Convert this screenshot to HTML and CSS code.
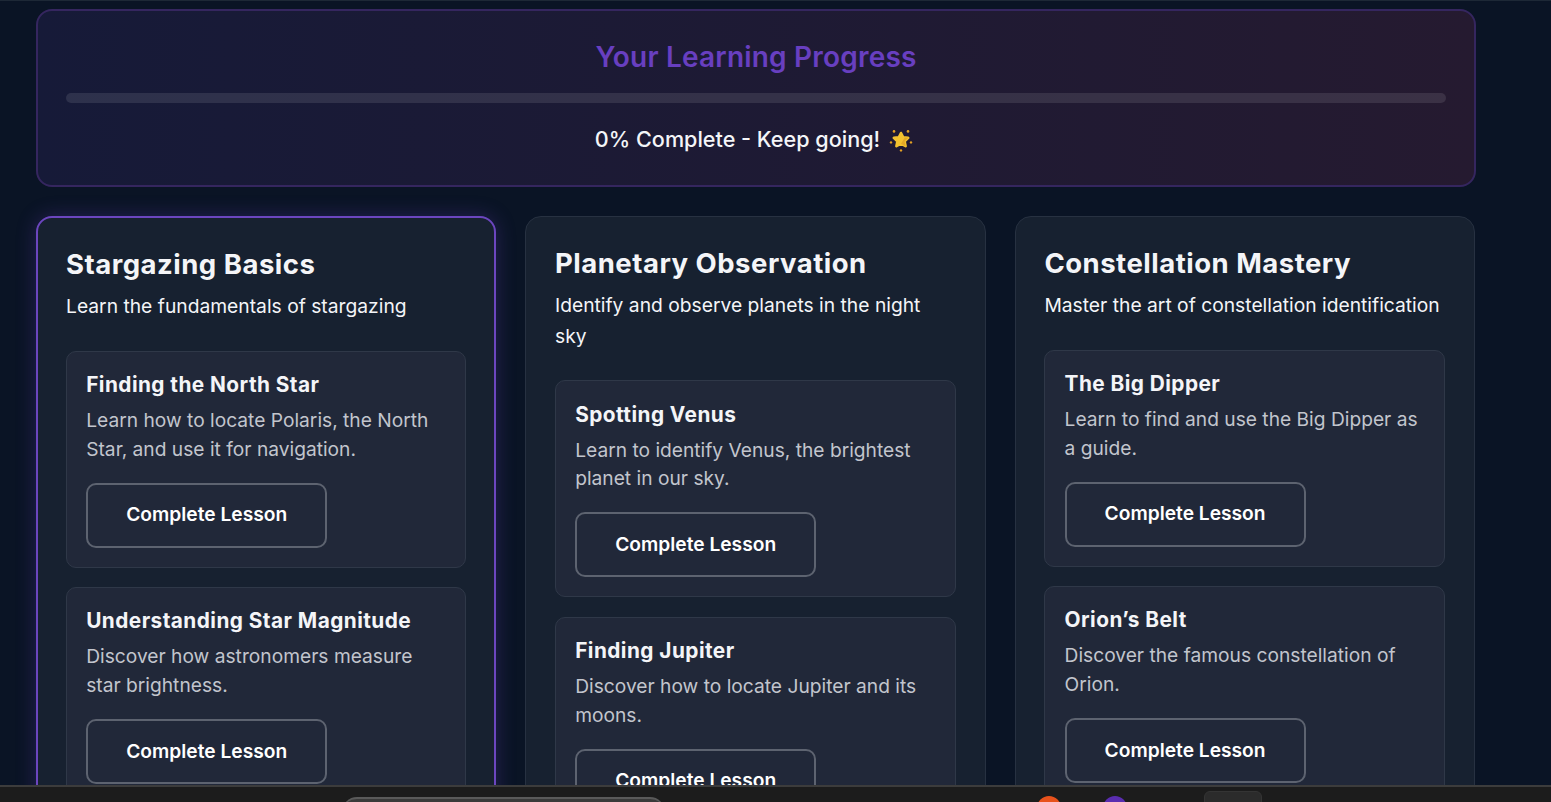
FILE: index.html
```html
<!DOCTYPE html>
<html>
	<head>
		<meta charset="utf-8">
		<meta name="viewport" content="width=device-width,initial-scale=1">
		<title>Stargazing Lessons</title>
		<link rel="stylesheet" href="styles.css">
	</head>
	<body>
		<main class="container">
			<section class="progress">
				<h2 class="progress-title">Your Learning Progress</h2>
				<div class="progress-track"></div>
				<p class="progress-text">
					<span>0% Complete - Keep going!</span>
					<svg class="star" viewBox="0 0 24 24" width="24" height="24" aria-hidden="true">
						<path d="M12 5l2.2 4.4 5 .4-3.6 3.4 1 5-4.6-2.5-4.6 2.5 1-5-3.6-3.4 5-.4z" fill="#f3c22f" stroke="#f3c22f" stroke-width="2.6" stroke-linejoin="round"/>
						<path d="M12 15.7l4.6 2.5-1-5 3.6-3.4-3.4-.3z" fill="#e3a927"/>
						<g fill="#e3a024">
							<circle cx="5" cy="3.4" r="1.3"/>
							<circle cx="19" cy="3.4" r="1.3"/>
							<circle cx="2" cy="14.4" r="1.2"/>
							<circle cx="22" cy="14.4" r="1.2"/>
							<circle cx="12" cy="22.4" r="1.2"/>
						</g>
					</svg>
				</p>
			</section>

			<div class="courses">
				<section class="course course-active">
					<h2 class="course-title">Stargazing Basics</h2>
					<p class="course-desc">Learn the fundamentals of stargazing</p>
					<article class="lesson">
						<h3>Finding the North Star</h3>
						<p>Learn how to locate Polaris, the North Star, and use it for navigation.</p>
						<button class="lesson-btn">Complete Lesson</button>
					</article>
					<article class="lesson">
						<h3>Understanding Star Magnitude</h3>
						<p>Discover how astronomers measure star brightness.</p>
						<button class="lesson-btn">Complete Lesson</button>
					</article>
				</section>

				<section class="course">
					<h2 class="course-title">Planetary Observation</h2>
					<p class="course-desc">Identify and observe planets in the night sky</p>
					<article class="lesson">
						<h3>Spotting Venus</h3>
						<p>Learn to identify Venus, the brightest planet in our sky.</p>
						<button class="lesson-btn">Complete Lesson</button>
					</article>
					<article class="lesson">
						<h3>Finding Jupiter</h3>
						<p>Discover how to locate Jupiter and its moons.</p>
						<button class="lesson-btn">Complete Lesson</button>
					</article>
				</section>

				<section class="course">
					<h2 class="course-title">Constellation Mastery</h2>
					<p class="course-desc">Master the art of constellation identification</p>
					<article class="lesson">
						<h3>The Big Dipper</h3>
						<p>Learn to find and use the Big Dipper as a guide.</p>
						<button class="lesson-btn">Complete Lesson</button>
					</article>
					<article class="lesson">
						<h3>Orion’s Belt</h3>
						<p>Discover the famous constellation of Orion.</p>
						<button class="lesson-btn">Complete Lesson</button>
					</article>
				</section>
			</div>
		</main>

		<div class="taskbar">
			<div class="task-pill"></div>
			<div class="task-dot task-orange"></div>
			<div class="task-dot task-purple"></div>
			<div class="task-tab"></div>
		</div>
	</body>
</html>
```

FILE: styles.css
```css
* {
	margin: 0;
	padding: 0;
	box-sizing: border-box;
}
html, body {
	height: 100%;
	overflow: hidden;
}
body {
	font-family: "Inter", "Liberation Sans", sans-serif;
	color: #f4f5f8;
	background: #0a1425;
	border-top: 1px solid #1d2836;
}
.container {
	width: 1476px;
	padding: 8px 0 0 36px;
}

.progress {
	height: 178px;
	padding: 28px;
	border: 2px solid #35265f;
	border-radius: 16px;
	background: linear-gradient(90deg, #161a38, #251a30);
	text-align: center;
}
.progress-title {
	font-size: 28px;
	font-weight: 600;
	letter-spacing: 0.2px;
	line-height: 36px;
	color: #683fc0;
	margin-bottom: 18px;
}
.progress-track {
	height: 10px;
	border-radius: 5px;
	background: rgba(255, 255, 255, 0.1);
}
.progress-text {
	display: flex;
	justify-content: center;
	align-items: center;
	gap: 9px;
	margin-top: 20px;
	font-size: 21.6px;
	font-weight: 500;
	line-height: 33px;
}
.star {
	margin-right: 4px;
}

.courses {
	display: grid;
	grid-template-columns: repeat(3, 460.4px);
	gap: 29px;
	margin-top: 29px;
	align-items: start;
}
.course {
	padding: 28px 29px 28px 28.6px;
	border: 1px solid #273141;
	border-radius: 16px;
	background: #172130;
}
.course-active {
	padding: 28px 28.6px 28px 28px;
	border: 2px solid #6c46bf;
	box-shadow: 0 0 20px rgba(104, 63, 192, 0.3);
}
.course-title {
	font-size: 27.5px;
	font-weight: 700;
	letter-spacing: 0.5px;
	line-height: 36px;
	margin-bottom: 9px;
}
.course-desc {
	font-size: 19.25px;
	line-height: 30.72px;
	margin-bottom: 29px;
}

.lesson {
	padding: 19.2px;
	border: 1px solid #2f3848;
	border-radius: 10px;
	background: #212839;
	margin-bottom: 19.6px;
}
.lesson h3 {
	font-size: 20.8px;
	font-weight: 700;
	letter-spacing: 0.45px;
	line-height: 27px;
	margin-bottom: 8px;
}
.lesson p {
	font-size: 19.2px;
	line-height: 28.8px;
	color: #c2c5cd;
	margin-bottom: 19px;
}
.lesson-btn {
	display: block;
	width: 241px;
	height: 65px;
	padding-bottom: 2px;
	border: 2px solid #5d6370;
	border-radius: 10px;
	background: transparent;
	color: #fff;
	font-family: inherit;
	font-size: 19.2px;
	font-weight: 600;
}

.taskbar {
	position: fixed;
	left: 0;
	right: 0;
	bottom: 0;
	height: 17px;
	overflow: hidden;
	background: #1c1c1c;
	border-top: 2px solid #3c3c3c;
}
.task-pill {
	position: absolute;
	left: 342px;
	top: 10px;
	width: 323px;
	height: 30px;
	border-radius: 15px;
	border-top: 2px solid #5a5a5a;
	background: #3a3a3a;
}
.task-dot {
	position: absolute;
	top: 9px;
	width: 24px;
	height: 24px;
	border-radius: 50%;
}
.task-orange {
	left: 1037px;
	background: #e8521c;
}
.task-purple {
	left: 1103px;
	background: #5a2db0;
}
.task-tab {
	position: absolute;
	left: 1204px;
	top: 4px;
	width: 58px;
	height: 30px;
	border-radius: 6px;
	border: 1px solid #343434;
	background: #2b2b2b;
}
```
